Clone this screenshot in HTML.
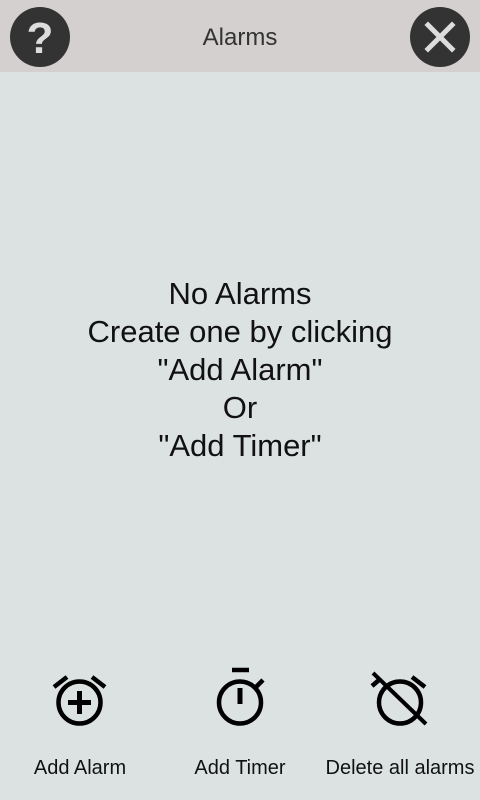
<!DOCTYPE html>
<html><head><meta charset="utf-8"><style>
html,body{margin:0;padding:0;width:480px;height:800px;overflow:hidden;background:#dce2e2;font-family:"Liberation Sans",sans-serif;}
.hdr{position:absolute;left:0;top:0;width:480px;height:72px;background:#d4d0cf;}
.title{position:absolute;left:0;width:480px;top:24px;text-align:center;font-size:24px;color:#333;}
.msg{position:absolute;left:0;width:480px;top:275px;text-align:center;font-size:31px;line-height:38px;color:#111;}
.lbl{position:absolute;top:757px;font-size:20px;color:#111;text-align:center;width:160px;}
</style></head><body>
<div class="hdr"></div>
<svg style="position:absolute;left:0;top:0" width="480" height="80">
<circle cx="40" cy="37" r="30" fill="#333"/>
<text x="40" y="53" text-anchor="middle" font-family="Liberation Sans" font-weight="bold" font-size="44" fill="#ddd">?</text>
<circle cx="440" cy="37" r="30" fill="#333"/>
<path d="M428 25 L452 49 M452 25 L428 49" stroke="#ddd" stroke-width="5" stroke-linecap="square"/>
</svg>
<div class="title">Alarms</div>
<div class="msg">No Alarms<br>Create one by clicking<br>"Add Alarm"<br>Or<br>"Add Timer"</div>
<svg style="position:absolute;left:0;top:650px" width="480" height="90" fill="none" stroke="#000" stroke-width="4.5">
<circle cx="79.5" cy="52.5" r="21"/>
<path d="M54 37 L67 27 M105 37 L92 27"/>
<path d="M79.5 41 V64 M68 52.5 H91" stroke-width="5"/>
<circle cx="240" cy="52.5" r="21"/>
<path d="M232 20 H249" stroke-width="4.5"/>
<path d="M240 38 V54" stroke-width="5"/>
<path d="M256 37 L263 30"/>
<circle cx="400" cy="52.5" r="21"/>
<path d="M425 37 L412 27 M372 36 L379 30"/>
<path d="M373 23 L426 74" stroke-width="4"/>
</svg>
<div class="lbl" style="left:0">Add Alarm</div>
<div class="lbl" style="left:160px">Add Timer</div>
<div class="lbl" style="left:316px;width:168px">Delete all alarms</div>
</body></html>
